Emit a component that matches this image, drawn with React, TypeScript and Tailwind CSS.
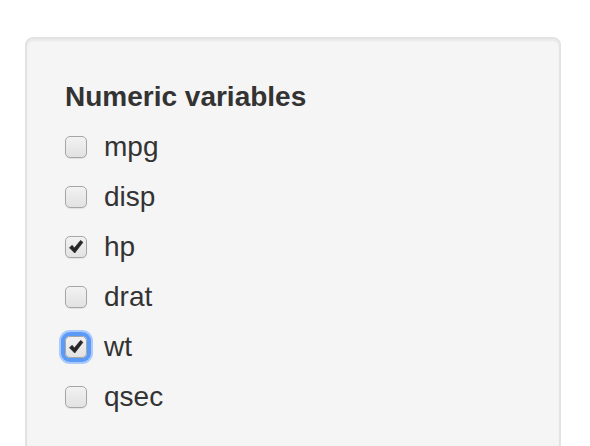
import React from 'react';

const options = [
  { name: 'mpg', checked: false },
  { name: 'disp', checked: false },
  { name: 'hp', checked: true },
  { name: 'drat', checked: false },
  { name: 'wt', checked: true, focused: true },
  { name: 'qsec', checked: false },
];

const Check = () => (
  <svg viewBox="0 0 22 22" className="absolute inset-0 h-full w-full">
    <path d="M3.8 11.8 L6.8 9.2 L9.2 12.2 L16 3.8 L18.6 5.8 L9.6 17.6 Z" fill="#262626" strokeLinejoin="round" stroke="#262626" strokeWidth="0.8" />
  </svg>
);

const Box = ({ checked, focused }: { checked: boolean; focused?: boolean }) => (
  <span
    className={`relative block h-[22px] w-[22px] shrink-0 rounded-[5px] border-[1.5px] border-[#a6a6a6] bg-gradient-to-b from-[#f2f2f2] to-[#e2e2e2] ${
      focused ? 'shadow-[0_0_0_4px_#5b9bf7,0_0_0_6px_#a9cafb]' : 'shadow-[0_1px_1px_rgba(0,0,0,0.08)]'
    }`}
  >
    {checked && <Check />}
  </span>
);

export default function App() {
  return (
    <div className="h-[446px] overflow-hidden bg-white pt-[37px] pl-[25px] pr-[29px]" style={{ fontFamily: '"Liberation Sans", Arial, sans-serif' }}>
      <div className="h-[440px] rounded-[8px] border-2 border-[#e3e3e3] bg-[#f5f5f5] px-[38px] pt-[38px] text-[#333333] shadow-[inset_0_2px_2px_rgba(0,0,0,0.05)]">
        <div className="text-[28px] font-bold leading-[40px]">Numeric variables</div>
        <div className="mt-[10px] flex flex-col gap-[10px]">
          {options.map((o) => (
            <label key={o.name} className="flex h-[40px] items-center gap-[17px]">
              <Box checked={o.checked} focused={o.focused} />
              <span className="text-[28px] leading-[40px]">{o.name}</span>
            </label>
          ))}
        </div>
      </div>
    </div>
  );
}
